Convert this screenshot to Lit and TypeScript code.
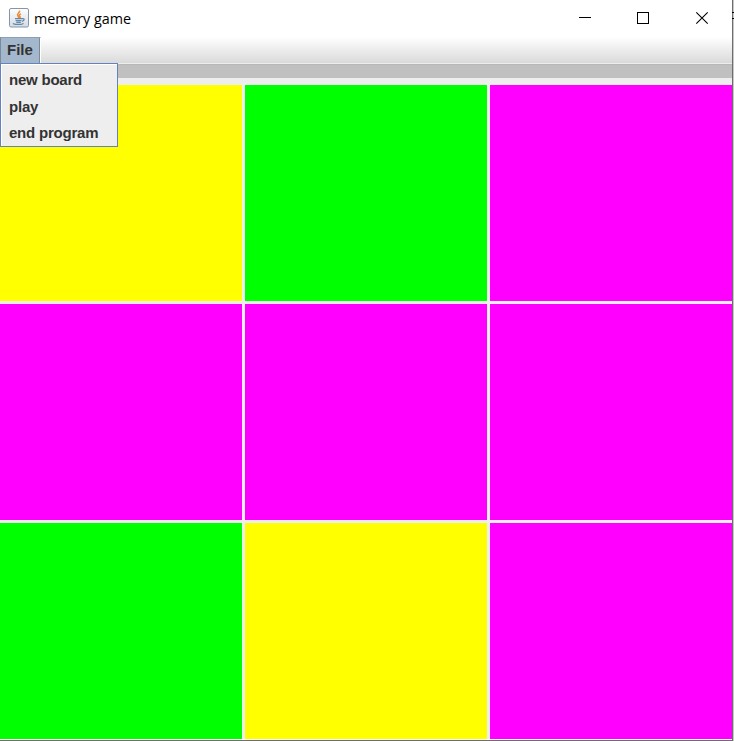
import { LitElement, html, css } from "lit";
import { customElement } from "lit/decorators.js";

const ITEMS = ["new board", "play", "end program"];
const CELLS = [
  "yellow", "green", "magenta",
  "magenta", "magenta", "magenta",
  "green", "yellow", "magenta",
];

@customElement("app-root")
export class AppRoot extends LitElement {
  static styles = css`
    :host { display: block; width: 734px; height: 741px; overflow: hidden; }
    * { box-sizing: border-box; }
    .desktop { position: relative; width: 734px; height: 741px; background: #c8c8c8; }
    .window {
      width: 733px; height: 741px; display: flex; flex-direction: column;
      background: #fff; border-right: 1px solid #6e6e6e; border-bottom: 1px solid #6e6e6e;
    }
    .edge { position: absolute; right: 0; top: 12px; width: 2px; height: 7px;
      border-top: 1px solid #000; border-bottom: 1px solid #000; }
    .title { height: 37px; flex: none; display: flex; align-items: center; padding-left: 9px; }
    .logo { width: 20px; height: 20px; margin-top: -2px; }
    .name { flex: 1; margin-left: 5px; font-family: "Open Sans", "Noto Sans", sans-serif; white-space: nowrap; }
    .name svg { display: block; }
    .controls { display: flex; }
    .controls svg { width: 58px; height: 37px; display: block; }
    .controls svg:last-child { width: 44px; }
    .menubar {
      position: relative; height: 27px; flex: none; display: flex;
      background: linear-gradient(#fff, #dadada); border-bottom: 1px solid #eee;
      font: bold 15px/26px "Liberation Sans", Arial, sans-serif; color: #333;
    }
    .file { width: 41px; height: 26px; padding-left: 6px; background: #a3b8cc;
      border-left: 1px solid #7a8a99; border-top: 1px solid #8d9fb1;
      border-right: 1px solid #fff; box-shadow: inset -1px 0 #7a8a99; line-height: 23px; }
    .popup {
      position: absolute; left: 0; top: 26px; width: 118px; height: 84px; z-index: 1;
      background: #eee; border: 1px solid #6382bf; box-shadow: inset 1px 1px #fff;
      padding: 3px 0 0 8px; line-height: 26.5px; letter-spacing: -0.22px; white-space: nowrap;
    }
    .strip { height: 14px; flex: none; background: #c0c0c0; border-top: 1px solid #b8b8b8; }
    .board {
      height: 661px; flex: none; padding-top: 7px; background: #eee; display: grid;
      grid-template-columns: repeat(3, 242px); grid-template-rows: repeat(3, 216px); gap: 3px;
    }
    .yellow { background: #ff0; }
    .green { background: #0f0; }
    .magenta { background: #f0f; }
  `;

  render() {
    return html`
      <div class="desktop">
        <div class="window">
          <div class="title">
            <svg class="logo" viewBox="0 0 20 20">
              <defs><linearGradient id="g" x2="0" y2="1"><stop stop-color="#fff" /><stop offset="1" stop-color="#d3dbe2" /></linearGradient></defs>
              <rect x=".5" y=".5" width="19" height="18.5" rx="1.5" fill="url(#g)" stroke="#8297ac" />
              <path d="M10.5 2.5c1 2.2-3.2 3.1-1.8 5.2.5.8 1.2 1.4 1.1 2.3M12 5.8c-2 1-2.2 1.6-1.1 2.8.5.6.1 1.1-.4 1.5" fill="none" stroke="#ed8b38" stroke-width="1.5" />
              <path d="M6 10.7h7.3M6.6 12.6h5.8M7.3 14.3h4.5M13 10.6c3-.5 2.7 2-.1 2.8M4.5 15.2c-1 1.5 8.5 1.8 10 .2" fill="none" stroke="#6388a8" stroke-width="1.3" />
            </svg>
            <div class="name"><svg width="110" height="20"><text x="0" y="15" font-size="14.5" textLength="97" lengthAdjust="spacingAndGlyphs">memory game</text></svg></div>
            <div class="controls">
              <svg viewBox="0 0 58 37"><path d="M7 17.5h12" stroke="#000" /></svg>
              <svg viewBox="0 0 58 37"><rect x="7.5" y="12.5" width="11" height="11" fill="none" stroke="#000" /></svg>
              <svg viewBox="0 0 44 37"><path d="M8.3 12.3l11.4 11.4M19.7 12.3L8.3 23.7" stroke="#000" stroke-width="1.1" /></svg>
            </div>
          </div>
          <div class="menubar">
            <div class="file">File</div>
            <div class="popup">${ITEMS.map((t) => html`<div>${t}</div>`)}</div>
          </div>
          <div class="strip"></div>
          <div class="board">${CELLS.map((c) => html`<div class=${c}></div>`)}</div>
        </div>
        <div class="edge"></div>
      </div>
    `;
  }
}
